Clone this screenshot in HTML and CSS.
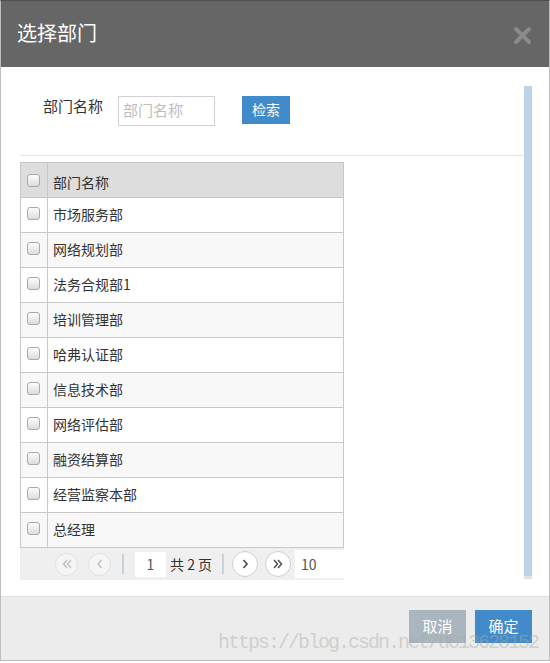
FILE: index.html
```html
<!DOCTYPE html>
<html lang="zh-CN">
<head>
<meta charset="utf-8">
<title>选择部门</title>
<link rel="stylesheet" href="styles.css">
</head>
<body>
<div class="dialog">
  <div class="header">
    <span class="title">选择部门</span>
    <span class="close">
      <svg width="19" height="19" viewBox="0 0 19 19"><path d="M3 3 L16 16 M16 3 L3 16" stroke="#8a8a8a" stroke-width="4" stroke-linecap="round" fill="none"/></svg>
    </span>
  </div>
  <div class="body">
    <div class="content">
      <div class="search">
        <span class="search-label">部门名称</span>
        <input class="search-input" type="text" placeholder="部门名称">
        <button class="btn-search">检索</button>
      </div>
      <div class="sep"></div>
      <div class="grid">
        <div class="row head"><div class="cb-cell"><span class="cb"></span></div><div class="name-cell">部门名称</div></div>
        <div class="row"><div class="cb-cell"><span class="cb"></span></div><div class="name-cell">市场服务部</div></div>
        <div class="row alt"><div class="cb-cell"><span class="cb"></span></div><div class="name-cell">网络规划部</div></div>
        <div class="row"><div class="cb-cell"><span class="cb"></span></div><div class="name-cell">法务合规部1</div></div>
        <div class="row alt"><div class="cb-cell"><span class="cb"></span></div><div class="name-cell">培训管理部</div></div>
        <div class="row"><div class="cb-cell"><span class="cb"></span></div><div class="name-cell">哈弗认证部</div></div>
        <div class="row alt"><div class="cb-cell"><span class="cb"></span></div><div class="name-cell">信息技术部</div></div>
        <div class="row"><div class="cb-cell"><span class="cb"></span></div><div class="name-cell">网络评估部</div></div>
        <div class="row alt"><div class="cb-cell"><span class="cb"></span></div><div class="name-cell">融资结算部</div></div>
        <div class="row"><div class="cb-cell"><span class="cb"></span></div><div class="name-cell">经营监察本部</div></div>
        <div class="row alt"><div class="cb-cell"><span class="cb"></span></div><div class="name-cell">总经理</div></div>
      </div>
      <div class="pager">
        <span class="pbtn disabled first">
          <svg width="12" height="12" viewBox="0 0 12 12"><path d="M6 2 L2.5 6 L6 10 M10 2 L6.5 6 L10 10" stroke="#bcbcbc" stroke-width="1.3" fill="none"/></svg>
        </span>
        <span class="pbtn disabled prev">
          <svg width="12" height="12" viewBox="0 0 12 12"><path d="M7.5 2 L4 6 L7.5 10" stroke="#bcbcbc" stroke-width="1.3" fill="none"/></svg>
        </span>
        <span class="psep"></span>
        <span class="pinput">1</span>
        <span class="ptext">共 2 页</span>
        <span class="psep second"></span>
        <span class="pbtn next">
          <svg width="12" height="12" viewBox="0 0 12 12"><path d="M4.5 2 L8 6 L4.5 10" stroke="#555" stroke-width="1.8" fill="none"/></svg>
        </span>
        <span class="pbtn last">
          <svg width="12" height="12" viewBox="0 0 12 12"><path d="M2 2 L5.5 6 L2 10 M6 2 L9.5 6 L6 10" stroke="#555" stroke-width="1.6" fill="none"/></svg>
        </span>
        <span class="psize">10</span>
      </div>
    </div>
    <div class="scrollbar"><div class="thumb"></div><div class="cap"></div></div>
  </div>
  <div class="footer">
    <button class="btn cancel">取消</button>
    <button class="btn ok">确定</button>
  </div>
  <div class="watermark">https://blog.csdn.net/u013628152</div>
</div>
</body>
</html>
```
FILE: styles.css
```css
* { box-sizing: border-box; }
html, body { margin: 0; padding: 0; background: #fff; }
body {
  font-family: "Noto Sans CJK SC", "Noto Sans", "Liberation Sans", sans-serif;
  color: #333;
}
.dialog {
  position: relative;
  width: 550px;
  height: 661px;
  border: 1px solid #bdbdbd;
  border-top-color: #4f4f4f;
  display: flex;
  flex-direction: column;
  background: #fff;
}
.header {
  height: 66px;
  background: #666;
  display: flex;
  align-items: center;
  justify-content: space-between;
  padding: 0 17px 0 16px;
  flex: none;
}
.title {
  color: #fff;
  font-size: 20px;
  line-height: 24px;
  margin-bottom: 2px;
}
.close { display: flex; margin-top: 2px; }
.body {
  flex: 1;
  display: flex;
  background: #fff;
}
.content {
  width: 523px;
  margin-left: 19px;
  padding-top: 29px;
}
.search {
  display: flex;
  align-items: flex-start;
  padding-left: 23px;
  height: 30px;
}
.search-label {
  font-size: 15px;
  line-height: 20px;
  color: #333;
  width: 60px;
  white-space: nowrap;
}
.search-input {
  margin-left: 15px;
  width: 97px;
  height: 30px;
  border: 1px solid #d2d2d2;
  padding: 0 4px 3px;
  font-family: inherit;
  font-size: 15px;
  color: #333;
  outline: none;
}
.search-input::placeholder { color: #bdbdbd; }
.btn-search {
  margin-left: 27px;
  width: 48px;
  height: 28px;
  border: none;
  background: #428bca;
  color: #fff;
  font-family: inherit;
  font-size: 14px;
  padding: 0 0 2px;
}
.sep {
  margin-top: 29px;
  height: 1px;
  background: #dde4ea;
}
.grid {
  margin-top: 6px;
  width: 324px;
  border: 1px solid #c8c8c8;
  border-bottom: none;
}
.row {
  display: flex;
  height: 35px;
  border-bottom: 1px solid #c8c8c8;
  background: #fff;
}
.row.alt { background: #f8f8f8; }
.row.head { background: #dddddd; }
.cb-cell {
  width: 27px;
  border-right: 1px solid #c8c8c8;
  padding: 9px 0 0 6px;
}
.row.head .cb-cell { padding-top: 11px; }
.cb {
  display: block;
  width: 13px;
  height: 13px;
  border: 1px solid #a9a9a9;
  border-radius: 3px;
  background: linear-gradient(#fdfdfd, #dcdcdc);
}
.name-cell {
  flex: 1;
  padding-left: 5px;
  font-size: 14px;
  line-height: 32px;
  color: #333;
}
.row.head .name-cell { padding-top: 3px; }
.pager {
  width: 324px;
  height: 32px;
  background: #efefef;
  display: flex;
  align-items: center;
  padding-left: 35px;
  font-size: 14px;
  color: #444;
}
.pbtn {
  display: flex;
  align-items: center;
  justify-content: center;
  border-radius: 50%;
  flex: none;
}
.pbtn.disabled {
  width: 23px;
  height: 23px;
  border: 1px solid #e0e0e0;
  background: #f5f5f5;
}
.pbtn.prev { margin-left: 10px; }
.pbtn.next, .pbtn.last {
  width: 26px;
  height: 26px;
  border: 1px solid #cfcfcf;
  background: #fff;
}
.pbtn.next { margin-left: 8px; }
.pbtn.last { margin-left: 7px; }
.psep {
  margin-left: 11px;
  width: 2px;
  height: 20px;
  background: #c7d3dc;
  flex: none;
}
.psep.second { margin-left: 8px; }
.pinput {
  margin-left: 11px;
  width: 31px;
  height: 25px;
  background: #fff;
  text-align: center;
  line-height: 25px;
  color: #555;
}
.ptext {
  margin-left: 4px;
  width: 44px;
  white-space: nowrap;
  color: #333;
}
.psize {
  margin-left: 4px;
  flex: 1;
  height: 28px;
  background: #fff;
  line-height: 28px;
  padding-left: 6px;
  color: #555;
}
.scrollbar {
  margin-top: 19px;
  width: 8px;
  margin-left: auto;
  margin-right: 17px;
  display: flex;
  flex-direction: column;
}
.thumb { height: 490px; background: #bcd4e6; }
.cap { height: 3px; background: #e2e2e2; }
.footer {
  flex: none;
  height: 64px;
  background: #ececec;
  border-top: 1px solid #e1e1e1;
  display: flex;
  justify-content: flex-end;
  align-items: flex-start;
  padding: 13px 17px 0 0;
  gap: 9px;
}
.btn {
  width: 57px;
  height: 33px;
  border: none;
  color: #fff;
  font-family: inherit;
  font-size: 15px;
  padding: 0 0 2px;
}
.btn.cancel { background: #a9b5bf; }
.btn.ok { background: #428bca; }
.watermark {
  position: absolute;
  left: 217px;
  top: 630px;
  font-family: "Liberation Mono", monospace;
  font-size: 20px;
  letter-spacing: -2px;
  color: rgba(170, 170, 160, 0.45);
  white-space: nowrap;
  pointer-events: none;
}
```
